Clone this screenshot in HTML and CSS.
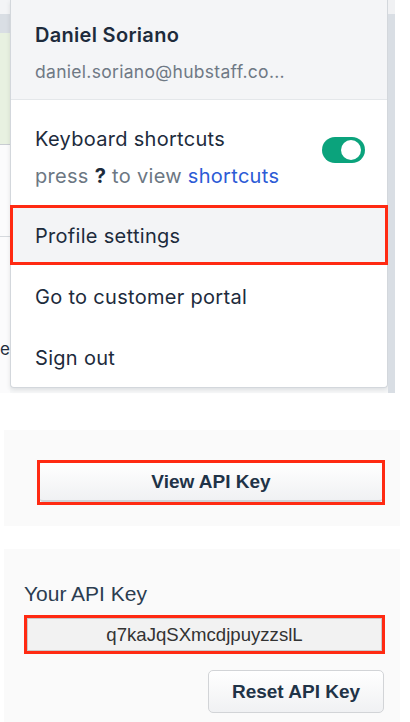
FILE: index.html
```html
<!DOCTYPE html>
<html lang="en">
<head>
<meta charset="utf-8">
<title>Profile menu</title>
<link rel="stylesheet" href="styles.css">
</head>
<body>
<div class="backdrop">
  <div class="side-left">
    <div class="bl-top"></div>
    <div class="bl-head"></div>
    <div class="bl-green"></div>
    <div class="bl-row"></div>
    <div class="bl-rest"><span class="bl-letter">e</span></div>
  </div>
  <div class="menu">
    <div class="menu-head">
      <div class="name">Daniel Soriano</div>
      <div class="email">daniel.soriano@hubstaff.co...</div>
    </div>
    <div class="kbd">
      <div class="kbd-text">
        <div class="item-label">Keyboard shortcuts</div>
        <div class="kbd-hint">press <b>?</b> to view <span class="link">shortcuts</span></div>
      </div>
      <div class="toggle"><span class="knob"></span></div>
    </div>
    <div class="item item-active">Profile settings</div>
    <div class="item">Go to customer portal</div>
    <div class="item">Sign out</div>
  </div>
  <div class="side-right">
    <div class="br-top"></div>
    <div class="br-rest"></div>
  </div>
</div>

<div class="panel panel-view">
  <div class="mark">
    <button class="btn btn-wide">View API Key</button>
  </div>
</div>

<div class="panel panel-key">
  <div class="key-label">Your API Key</div>
  <div class="mark">
    <div class="key-field">q7kaJqSXmcdjpuyzzslL</div>
  </div>
  <div class="key-actions">
    <button class="btn btn-reset">Reset API Key</button>
  </div>
</div>
</body>
</html>
```

FILE: styles.css
```css
* { box-sizing: border-box; }

html, body {
  margin: 0;
  padding: 0;
  background: #ffffff;
  overflow: hidden;
}

body {
  width: 410px;
  height: 722px;
  font-family: Inter, "Liberation Sans", sans-serif;
}

/* ---------- backdrop with dropdown ---------- */
.backdrop {
  width: 395px;
  height: 393px;
  display: grid;
  grid-template-columns: 10px 378px 7px;
  background: #f7f8f9;
}

.side-left {
  display: flex;
  flex-direction: column;
}
.bl-top { height: 14px; background: #f3f4f6; }
.bl-head { height: 19px; background: #d9dee4; }
.bl-green { height: 112px; background: #e8f1e1; border-bottom: 1px solid #c9cdd2; }
.bl-row { height: 92px; background: #fbfbfc; border-bottom: 1px solid #d6dade; }
.bl-rest {
  flex: 1;
  background: #fbfbfc;
  overflow: hidden;
  padding-top: 100px;
}
.bl-letter {
  display: block;
  font-size: 17px;
  line-height: 24px;
  color: #1f2d3d;
}

.side-right {
  display: flex;
  flex-direction: column;
}
.br-top { height: 14px; background: #f0f1f3; }
.br-rest { flex: 1; background: #d9dee4; }

.menu {
  height: 388px;
  background: #ffffff;
  border: 1px solid #d3d7dc;
  border-top: none;
  border-radius: 0 0 4px 4px;
  box-shadow: 0 2px 4px rgba(40, 50, 60, 0.12);
  display: flex;
  flex-direction: column;
  color: #1d2b3c;
  letter-spacing: 0.3px;
}

.menu-head {
  height: 100px;
  background: #f4f5f7;
  border-bottom: 1px solid #e4e7ea;
  padding: 22px 24px 0;
}
.name {
  font-size: 20px;
  font-weight: 600;
  line-height: 26px;
  color: #1d2b3c;
}
.email {
  margin-top: 12px;
  font-size: 17.5px;
  line-height: 24px;
  color: #6f7985;
}

.kbd {
  height: 105px;
  display: flex;
  justify-content: space-between;
  padding: 26px 22px 0 24px;
}
.item-label {
  font-size: 20px;
  line-height: 26px;
}
.kbd-hint {
  margin-top: 11px;
  font-size: 20px;
  line-height: 26px;
  color: #6c7783;
}
.kbd-hint b {
  color: #1d2b3c;
  font-weight: 700;
}
.link { color: #2c5bd6; }

.toggle {
  margin-top: 11px;
  width: 43px;
  height: 26px;
  border-radius: 13px;
  background: #0ba37c;
  display: flex;
  align-items: center;
  justify-content: flex-end;
  padding-right: 4px;
}
.knob {
  width: 20px;
  height: 20px;
  border-radius: 50%;
  background: #ffffff;
}

.item {
  height: 61px;
  display: flex;
  align-items: center;
  padding-left: 24px;
  padding-top: 3px;
  font-size: 20px;
}
.item-active {
  background: #f3f4f6;
  outline: 3px solid #ff2a12;
  outline-offset: -3px;
  margin: 0 -1px;
  padding-left: 25px;
}

/* ---------- lower panels ---------- */
.panel {
  margin-left: 4px;
  width: 396px;
  background: #fafafa;
  font-family: "Liberation Sans", Arial, sans-serif;
  color: #1f3347;
}

.panel-view {
  margin-top: 37px;
  height: 96px;
  padding: 30px 15px 0 33px;
}

.mark {
  border: 3px solid #ff2a12;
}

.btn {
  display: block;
  font-family: "Liberation Sans", Arial, sans-serif;
  font-weight: 700;
  font-size: 19px;
  color: #1f3347;
  background: linear-gradient(#ffffff, #f0f1f3);
  cursor: pointer;
}

.btn-wide {
  width: 100%;
  height: 39px;
  border: none;
  border-bottom: 2px solid #cfd2d6;
  border-radius: 3px;
  padding: 0;
}

.panel-key {
  margin-top: 23px;
  height: 173px;
  padding: 33px 15px 0 20px;
}

.key-label {
  font-size: 21px;
  line-height: 24px;
  color: #2b3d50;
}

.panel-key .mark {
  margin-top: 9px;
}

.key-field {
  height: 33px;
  background: #f2f2f2;
  border: 1px solid #c9c9c9;
  text-align: center;
  font-size: 18.6px;
  line-height: 31px;
  color: #333333;
}

.key-actions {
  margin-top: 16px;
  display: flex;
  justify-content: flex-end;
  padding-right: 1px;
}

.btn-reset {
  width: 176px;
  height: 43px;
  border: 1px solid #d2d4d7;
  border-radius: 5px;
  padding: 0;
}
```
